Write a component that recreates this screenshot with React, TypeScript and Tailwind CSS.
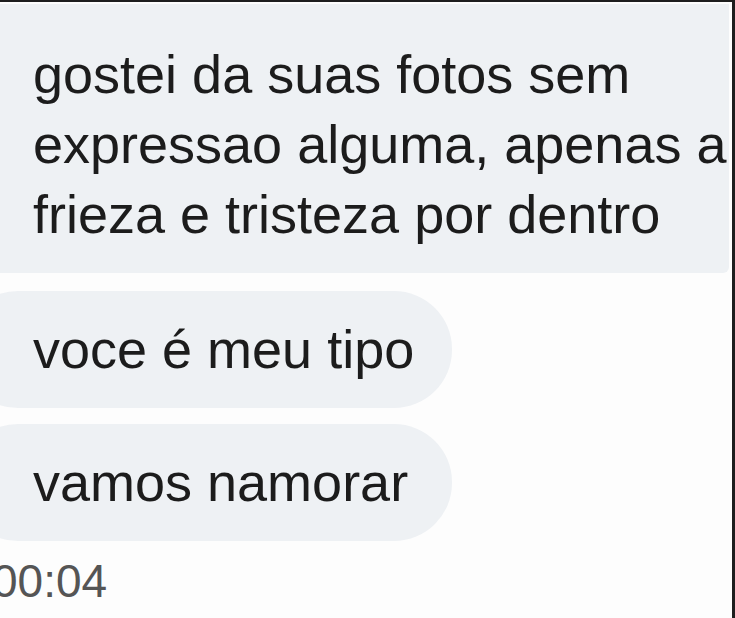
const Bubble = ({ children }: { children: React.ReactNode }) => {
  return (
    <div className="-ml-[40px] w-[492px] rounded-[58px] bg-[#eef1f4] pl-[73px] pt-[23px] pb-[24px]">
      <div className="whitespace-nowrap">{children}</div>
    </div>
  );
};

const App = () => {
  return (
    <div
      className="w-[735px] h-[618px] overflow-hidden bg-[#fdfdfd] border-t-2 border-r-[3px] border-[#1e1e1e] text-[#1c1c1c] text-[54px] leading-[70px]"
      style={{ fontFamily: '"Liberation Sans", Arial, sans-serif' }}
    >
      <div className="flex flex-col pt-[2px]">
        {/* first message, cut at the top */}
        <div className="w-[729px] bg-[#eef1f4] rounded-br-[6px] pl-[33px] pt-[35px] pb-[24px]">
          <div className="whitespace-nowrap">gostei da suas fotos sem</div>
          <div className="whitespace-nowrap">expressao alguma, apenas a</div>
          <div className="whitespace-nowrap">frieza e tristeza por dentro</div>
        </div>

        <div className="mt-[18px] flex flex-col gap-[16px]">
          <Bubble>voce é meu tipo</Bubble>
          <Bubble>vamos namorar</Bubble>
        </div>

        <div className="-ml-[8px] mt-[16px] text-[46px] leading-[48px] text-[#555555]">
          00:04
        </div>
      </div>
    </div>
  );
};

export default App;
